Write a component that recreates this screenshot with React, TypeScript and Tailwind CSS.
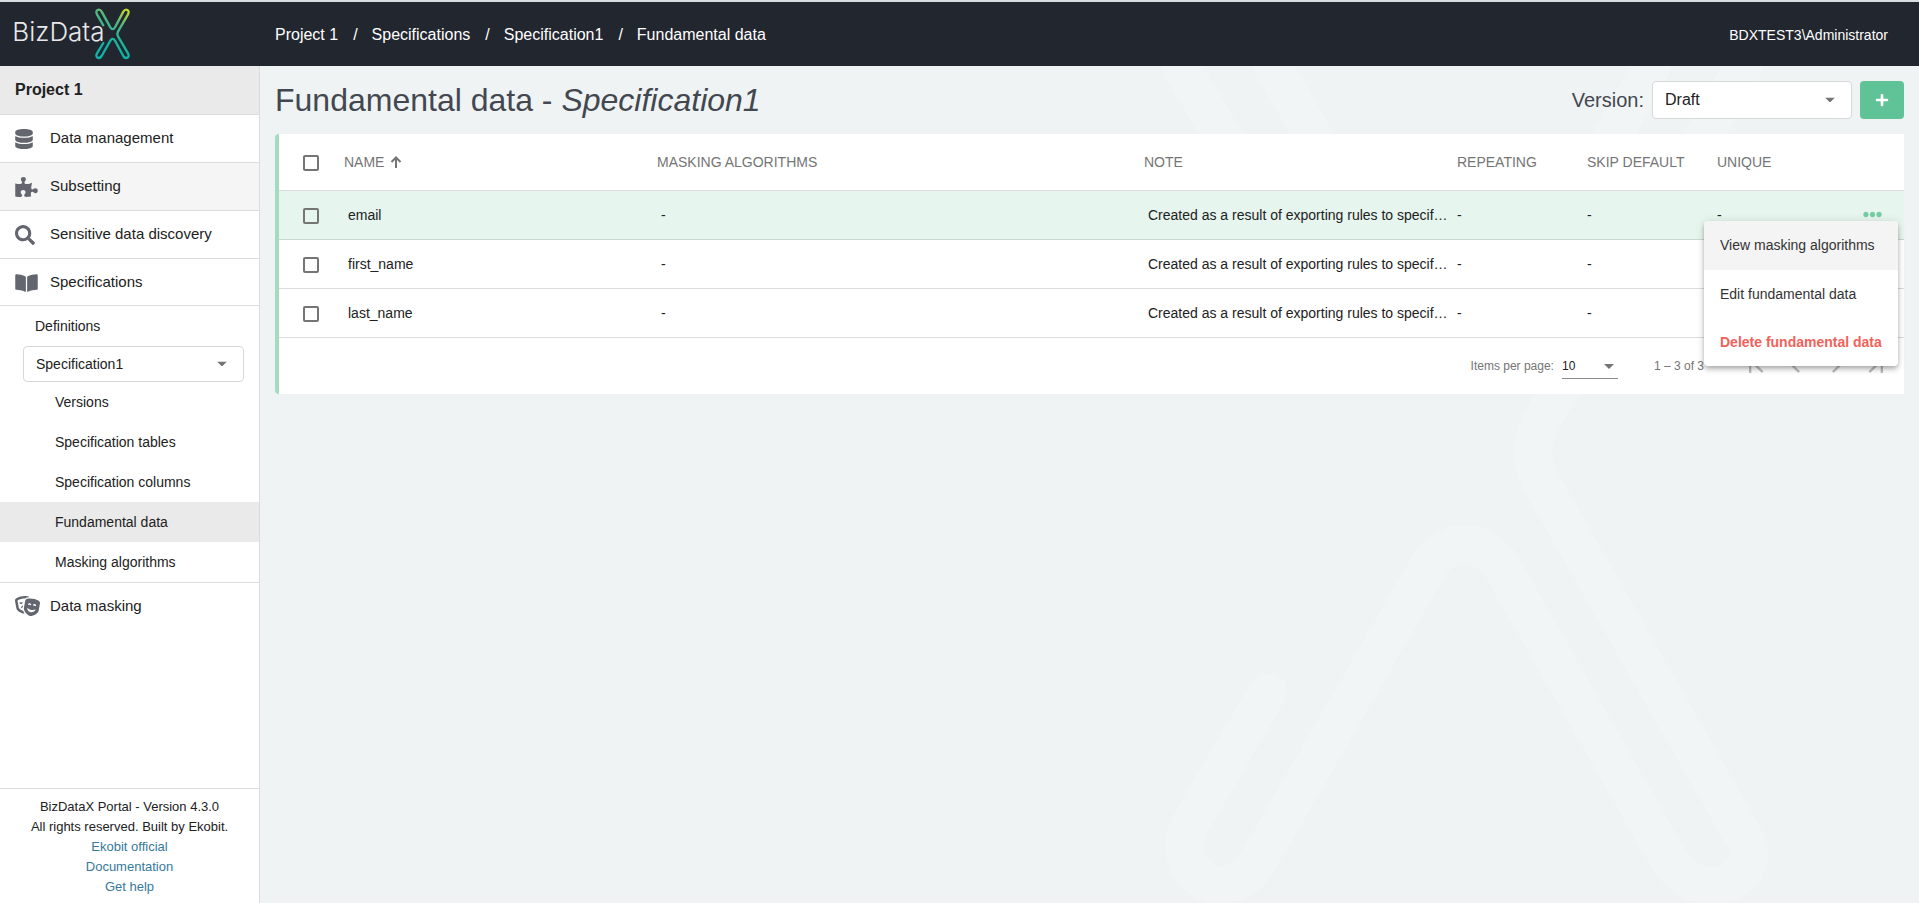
import { useState } from 'react';
import type { ReactNode } from 'react';
import type { IconType } from 'react-icons';
import {
  FaBookOpen,
  FaDatabase,
  FaEllipsisH,
  FaPlus,
  FaPuzzlePiece,
  FaSearch,
  FaTheaterMasks,
} from 'react-icons/fa';

interface FundamentalDataRow {
  name: string;
  algorithms: string;
  note: string;
  repeating: string;
  skipDefault: string;
  unique: string;
}

const NOTE = 'Created as a result of exporting rules to specif…';

const ROWS: FundamentalDataRow[] = ['email', 'first_name', 'last_name'].map(name => ({
  name,
  algorithms: '-',
  note: NOTE,
  repeating: '-',
  skipDefault: '-',
  unique: '-',
}));

const BREADCRUMBS = ['Project 1', 'Specifications', 'Specification1', 'Fundamental data'];

const SPECIFICATION_LINKS = [
  'Versions',
  'Specification tables',
  'Specification columns',
  'Fundamental data',
  'Masking algorithms',
];

const FOOTER_LINKS = ['Ekobit official', 'Documentation', 'Get help'];

// Material pagination glyphs
const PAGE_BUTTONS = [
  { label: 'First page', path: 'M18.41 16.59L13.82 12l4.59-4.59L17 6l-6 6 6 6zM6 6h2v12H6z' },
  { label: 'Previous page', path: 'M15.41 7.41L14 6l-6 6 6 6 1.41-1.41L10.83 12z' },
  { label: 'Next page', path: 'M10 6L8.59 7.41 13.17 12l-4.58 4.59L10 18l6-6z' },
  { label: 'Last page', path: 'M5.59 7.41L10.18 12l-4.59 4.59L7 18l6-6-6-6zM16 6h2v12h-2z' },
];

export default function App() {
  return (
    <div className="flex h-screen flex-col bg-[#eff3f4] font-['Liberation_Sans',Arial,sans-serif] text-[#212121]">
      <TopBar />
      <div className="flex min-h-0 flex-1">
        <Sidebar />
        <main className="relative min-w-0 flex-1 px-[15px]">
          <Watermark />
          <div className="relative">
            <PageHeader />
            <DataCard />
          </div>
        </main>
      </div>
    </div>
  );
}

// ─── Top bar ─────────────────────────────────────────────────

function TopBar() {
  return (
    <header className="flex h-[66px] shrink-0 items-center border-t-2 border-[#d9dce1] bg-[#22262f] text-white">
      <a href="#home" className="w-[275px] shrink-0 pl-2" aria-label="BizDataX">
        <Logo />
      </a>
      <nav className="flex flex-1 items-center gap-[15px] pt-px text-base" aria-label="Breadcrumb">
        {BREADCRUMBS.map((crumb, index) => (
          <span key={crumb} className="flex gap-[14px]">
            {index > 0 && <span>/</span>}
            <a href="#crumb">{crumb}</a>
          </span>
        ))}
      </nav>
      <span className="pr-[31px] pt-px text-sm">BDXTEST3\Administrator</span>
    </header>
  );
}

function Logo() {
  return (
    <svg viewBox="0 0 390 180" className="block h-[60px] w-[130px]">
      <defs>
        <linearGradient id="logo-x" x1="350" y1="15" x2="290" y2="125" gradientUnits="userSpaceOnUse">
          <stop offset="0" stopColor="#c9d82f" />
          <stop offset="0.35" stopColor="#55b97d" />
          <stop offset="0.75" stopColor="#1fb39c" />
          <stop offset="1" stopColor="#0db3a8" />
        </linearGradient>
      </defs>
      <path
        d="M286 64L267 31C260 18 274 12 281 23L307 70Q314 81 321 70L346 23C353 12 367 18 360 31L330 83Q326 90 330 97L360 148C367 161 353 167 346 156L321 110Q314 99 307 110L281 156C274 167 260 161 267 148L286 117"
        fill="none"
        stroke="url(#logo-x)"
        strokeWidth="7"
        strokeLinecap="round"
      />
      <text x="13" y="111" fill="#e8e8ea" fontSize="78" fontWeight="300" fontFamily="Inter, sans-serif">
        BizData
      </text>
    </svg>
  );
}

// ─── Sidebar ─────────────────────────────────────────────────

function Sidebar() {
  return (
    <aside className="flex w-[260px] shrink-0 flex-col border-r border-[#dcdcdc] bg-white">
      <div className="flex h-[49px] items-center border-b border-[#dcdcdc] bg-[#eaeaea] px-[15px] pb-px text-base font-bold">
        Project 1
      </div>
      <nav>
        <NavItem icon={FaDatabase} iconClass="w-[18px]" label="Data management" />
        <NavItem icon={FaPuzzlePiece} iconClass="w-[23px]" label="Subsetting" active />
        <NavItem icon={FaSearch} iconClass="w-5" label="Sensitive data discovery" />
        <NavItem icon={FaBookOpen} iconClass="w-[23px]" label="Specifications" />
        <div className="-mt-[2px] border-y border-[#dcdcdc] bg-white">
          <a href="#definitions" className="flex h-10 items-center pl-[35px] text-sm">
            Definitions
          </a>
          <SelectBox label="Specification" className="ml-[23px] mr-[15px] h-9 text-sm">
            <option>Specification1</option>
          </SelectBox>
          {SPECIFICATION_LINKS.map(link => (
            <a
              key={link}
              href="#specification"
              className={`flex h-10 items-center pl-[55px] text-sm ${link === 'Fundamental data' ? 'bg-[#eaeaea]' : ''}`}
            >
              {link}
            </a>
          ))}
        </div>
        <NavItem icon={FaTheaterMasks} iconClass="w-[25px]" label="Data masking" last />
      </nav>
      <footer className="mt-auto border-t border-[#dcdcdc] pb-[6px] pt-2 text-center text-[13px] leading-5">
        <p>BizDataX Portal - Version 4.3.0</p>
        <p>All rights reserved. Built by Ekobit.</p>
        {FOOTER_LINKS.map(link => (
          <p key={link}>
            <a href="#about" className="text-[#35799c]">
              {link}
            </a>
          </p>
        ))}
      </footer>
    </aside>
  );
}

interface NavItemProps {
  readonly icon: IconType;
  readonly iconClass: string;
  readonly label: string;
  readonly active?: boolean;
  readonly last?: boolean;
}

function NavItem({ icon: Icon, iconClass, label, active, last }: NavItemProps) {
  return (
    <a
      href="#section"
      className={`flex items-center pl-[15px] text-[15px] ${last ? 'h-[46px]' : 'h-12 border-b border-[#dcdcdc]'} ${active ? 'bg-[#f5f5f5]' : ''}`}
    >
      <span className="w-[35px]">
        <Icon className={`h-5 text-[#63666e] ${iconClass}`} />
      </span>
      {label}
    </a>
  );
}

interface SelectBoxProps {
  readonly label: string;
  readonly className: string;
  readonly children: ReactNode;
}

function SelectBox({ label, className, children }: SelectBoxProps) {
  return (
    <div className={`relative rounded border border-[#d6d8da] bg-white ${className}`}>
      <select aria-label={label} className="size-full appearance-none bg-transparent pb-px pl-3 pr-8 outline-none">
        {children}
      </select>
      <Caret className="pointer-events-none absolute right-4 top-1/2 -translate-y-1/2" />
    </div>
  );
}

function Caret({ className }: { readonly className: string }) {
  return (
    <svg viewBox="0 0 10 5" className={`h-[5px] w-[10px] fill-[#757575] ${className}`}>
      <path d="M0 0h10L5 5z" />
    </svg>
  );
}

// ─── Page content ────────────────────────────────────────────

function PageHeader() {
  return (
    <div className="flex h-[68px] items-center text-[#43474f]">
      <h1 className="flex-1 text-[32px] leading-10">
        Fundamental data - <em>Specification1</em>
      </h1>
      <span className="pr-2 text-xl">Version:</span>
      <SelectBox label="Version" className="h-[38px] w-[200px] text-base text-[#212121]">
        <option>Draft</option>
      </SelectBox>
      <button
        type="button"
        aria-label="Add fundamental data"
        className="ml-2 flex h-[38px] w-11 items-center justify-center rounded bg-[#5fc397] text-white"
      >
        <FaPlus className="size-[14px]" />
      </button>
    </div>
  );
}

function Checkbox({ label }: { readonly label: string }) {
  return (
    <input
      type="checkbox"
      aria-label={label}
      className="mt-[2px] block size-4 appearance-none rounded-xs border-2 border-[#757575] checked:bg-[#5fc397]"
    />
  );
}

function DataCard() {
  const [openRow, setOpenRow] = useState<string | null>('email');

  return (
    <section className="rounded-l border-l-4 border-[#a3dcc1] bg-white">
      <table className="w-full table-fixed text-left text-sm">
        <colgroup>
          <col className="w-[65px]" />
          <col className="w-[313px]" />
          <col />
          <col className="w-[313px]" />
          <col className="w-[130px]" />
          <col className="w-[130px]" />
          <col className="w-[187px]" />
        </colgroup>
        <thead>
          <tr className="h-14 border-b border-[#dcdcdc] text-[#757575] [&>th]:font-normal">
            <th className="pl-6">
              <Checkbox label="Select all" />
            </th>
            <th>
              <span className="flex items-center gap-[6px]">
                NAME
                <svg viewBox="0 0 12 12" className="size-3 fill-none stroke-[#757575] stroke-2">
                  <path d="M6 12V2M1.500 6L6 1.500L10.500 6" />
                </svg>
              </span>
            </th>
            <th>MASKING ALGORITHMS</th>
            <th>NOTE</th>
            <th>REPEATING</th>
            <th>SKIP DEFAULT</th>
            <th>UNIQUE</th>
          </tr>
        </thead>
        <tbody>
          {ROWS.map(row => {
            const isOpen = openRow === row.name;
            return (
              <tr key={row.name} className={`h-[49px] border-b ${isOpen ? 'border-[#cbd8d2] bg-[#e6f5ee]' : 'border-[#dcdcdc]'}`}>
                <td className="pl-6">
                  <Checkbox label={`Select ${row.name}`} />
                </td>
                <td className="pl-1">{row.name}</td>
                <td className="pl-1">{row.algorithms}</td>
                <td className="whitespace-nowrap pl-1">{row.note}</td>
                <td>{row.repeating}</td>
                <td>{row.skipDefault}</td>
                <td className="relative pr-[22px]">
                  <div className="flex items-center justify-between">
                    {row.unique}
                    <button type="button" aria-label="Row actions" onClick={() => setOpenRow(isOpen ? null : row.name)}>
                      <FaEllipsisH className={`size-[19px] ${isOpen ? 'text-[#76cca5]' : 'text-transparent'}`} />
                    </button>
                  </div>
                  {isOpen && <RowMenu />}
                </td>
              </tr>
            );
          })}
        </tbody>
      </table>
      <Paginator />
    </section>
  );
}

function RowMenu() {
  return (
    <div
      role="menu"
      className="absolute right-[6px] top-[30px] z-10 w-[194px] overflow-hidden rounded bg-white text-[#333333] shadow-[0_2px_4px_-1px_rgba(0,0,0,0.2),0_4px_5px_rgba(0,0,0,0.14),0_1px_10px_rgba(0,0,0,0.12)]"
    >
      <button type="button" role="menuitem" className="block h-[49px] w-full bg-[#f4f4f4] pl-4 text-left">
        View masking algorithms
      </button>
      <button type="button" role="menuitem" className="block h-12 w-full pl-4 text-left">
        Edit fundamental data
      </button>
      <button type="button" role="menuitem" className="block h-12 w-full whitespace-nowrap pl-4 text-left font-bold text-[#f0625a]">
        Delete fundamental data
      </button>
    </div>
  );
}

function Paginator() {
  return (
    <div className="flex h-14 items-center justify-end pr-2 pt-px text-xs text-[#757575]">
      <label htmlFor="page-size">Items per page:</label>
      <div className="relative ml-2 mr-9 h-[25px] w-14 border-b border-[#8c8c8c]">
        <select id="page-size" className="size-full appearance-none bg-transparent text-[#212121] outline-none">
          <option>10</option>
        </select>
        <Caret className="pointer-events-none absolute right-1 top-[10px]" />
      </div>
      <span className="mr-8">1 – 3 of 3</span>
      {PAGE_BUTTONS.map(button => (
        <button key={button.label} type="button" disabled aria-label={button.label} className="flex size-10 items-center justify-center">
          <svg viewBox="0 0 24 24" className="size-7 fill-[#bdbdbd]">
            <path d={button.path} />
          </svg>
        </button>
      ))}
    </div>
  );
}

// Oversized brand X behind the content
function Watermark() {
  return (
    <svg
      viewBox="1150 66 769 837"
      aria-hidden="true"
      className="absolute right-0 top-0 h-[837px] w-[769px] fill-none stroke-[#f2f5f6]"
      strokeWidth="38"
      strokeLinecap="round"
    >
      <path d="M1268 692L1190 824C1164 875 1232 914 1261 856L1431 562Q1464 526 1499 562L1668 858C1700 912 1772 876 1742 834L1540 480Q1526 452 1540 424L1744 66" />
      <path d="M1652 66L1499 342Q1464 380 1431 342L1273 66" />
      <path d="M1181 66L1268 214" />
    </svg>
  );
}
